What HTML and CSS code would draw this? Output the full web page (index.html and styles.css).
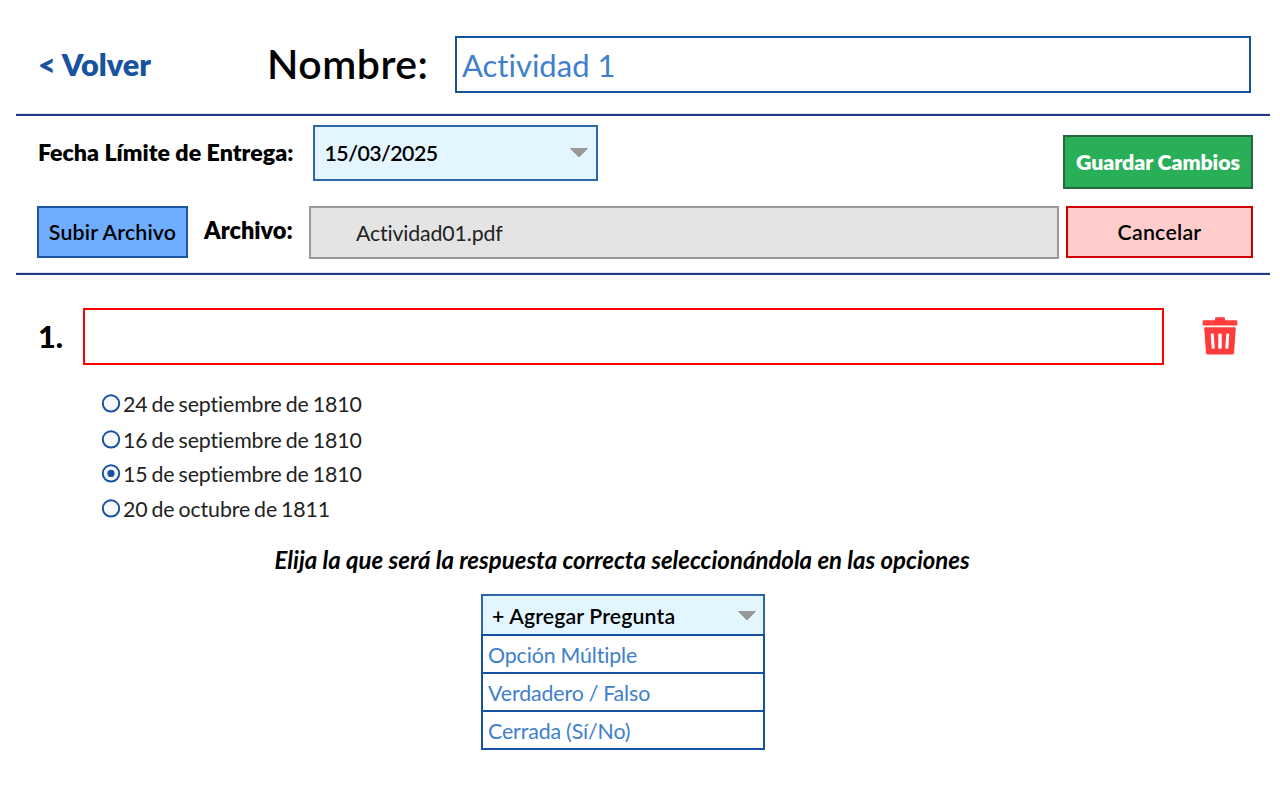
FILE: index.html
```html
<!DOCTYPE html>
<html lang="es">
<head>
<meta charset="utf-8">
<title>Actividad 1</title>
<link rel="stylesheet" href="styles.css">
</head>
<body>
<header class="header">
  <a class="back"><span class="t">&lt; Volver</span></a>
  <label class="name-label"><span class="t">Nombre:</span></label>
  <div class="name-field"><span class="t">Actividad 1</span></div>
</header>
<section class="toolbar">
  <div class="row row-date">
    <label class="date-label"><span class="t">Fecha Límite de Entrega:</span></label>
    <div class="select date-select"><span class="t">15/03/2025</span>
      <svg class="arrow" width="20" height="12" viewBox="0 0 20 12"><path d="M1.500 1.500H18.500L10 10Z" fill="#999" stroke="#999" stroke-linejoin="round"/></svg>
    </div>
    <button class="btn save"><span class="t">Guardar Cambios</span></button>
  </div>
  <div class="row row-file">
    <button class="btn upload"><span class="t">Subir Archivo</span></button>
    <label class="file-label"><span class="t">Archivo:</span></label>
    <div class="file-field"><span class="t">Actividad01.pdf</span></div>
    <button class="btn cancel"><span class="t">Cancelar</span></button>
  </div>
</section>
<main class="main">
  <div class="question">
    <span class="number"><span class="t">1.</span></span>
    <div class="question-field"></div>
    <svg class="trash" width="38" height="40" viewBox="0 0 38 40">
      <path fill="#ff3b3b" fill-rule="evenodd" d="M2.200 4.200H14V2.700Q14 1.300 15.400 1.300H22.600Q24 1.300 24 2.700V4.200H35.800Q36.300 4.200 36.300 4.700V8.900Q36.300 9.400 35.800 9.400H2.200Q1.700 9.400 1.700 8.900V4.700Q1.700 4.200 2.200 4.200ZM4.200 11.200H33.800Q34.900 11.200 34.800 12.300L33 37Q32.800 38.600 31.200 38.600H6.800Q5.200 38.600 5 37L3.200 12.300Q3.100 11.200 4.200 11.200ZM9.700 18.500Q9.600 17.500 10.600 17.500H11.700Q12.700 17.500 12.800 18.500L13.700 31.700Q13.700 32.700 12.800 32.700H11.600Q10.700 32.700 10.600 31.700ZM17.300 18.500Q17.300 17.500 18.200 17.500H19.800Q20.700 17.500 20.700 18.500V31.700Q20.700 32.700 19.800 32.700H18.200Q17.300 32.700 17.300 31.700ZM25.200 18.500Q25.300 17.500 26.300 17.500H27.400Q28.400 17.500 28.300 18.500L27.400 31.700Q27.300 32.700 26.400 32.700H25.200Q24.300 32.700 24.300 31.700Z"/>
    </svg>
  </div>
  <ul class="options">
    <li class="option"><svg width="20" height="20" viewBox="0 0 20 20"><circle class="ring" cx="10" cy="10.400" r="8.200"/></svg><span class="t">24 de septiembre de 1810</span></li>
    <li class="option"><svg width="20" height="20" viewBox="0 0 20 20"><circle class="ring" cx="10" cy="10.400" r="8.200"/></svg><span class="t">16 de septiembre de 1810</span></li>
    <li class="option"><svg width="20" height="20" viewBox="0 0 20 20"><circle class="ring" cx="10" cy="10.400" r="8.200"/><circle class="dot" cx="10" cy="10.400" r="3.600"/></svg><span class="t">15 de septiembre de 1810</span></li>
    <li class="option"><svg width="20" height="20" viewBox="0 0 20 20"><circle class="ring" cx="10" cy="10.400" r="8.200"/></svg><span class="t">20 de octubre de 1811</span></li>
  </ul>
  <p class="hint"><span class="t">Elija la que será la respuesta correcta seleccionándola en las opciones</span></p>
  <div class="add">
    <div class="select add-select"><span class="t">+ Agregar Pregunta</span>
      <svg class="arrow" width="20" height="12" viewBox="0 0 20 12"><path d="M1.500 1.500H18.500L10 10Z" fill="#999" stroke="#999" stroke-linejoin="round"/></svg>
    </div>
    <div class="item"><span class="t">Opción Múltiple</span></div>
    <div class="item"><span class="t">Verdadero / Falso</span></div>
    <div class="item"><span class="t">Cerrada (Sí/No)</span></div>
  </div>
</main>
</body>
</html>
```
FILE: styles.css
```css
* { box-sizing: border-box; }
body { margin: 0; width: 1280px; height: 800px; overflow: hidden; background: #fff; color: #000; font-family: "Lato", sans-serif; font-size: 21.33px; line-height: 26px; font-variant-ligatures: none; }
.t { display: block; white-space: nowrap; }
.header { display: flex; align-items: flex-start; height: 113px; margin: 0 10px 0 16px; padding: 36px 19px 0 22px; }
.back { width: 229px; padding-top: 11px; color: #1853a0; font-size: 30.67px; line-height: 36px; font-weight: 800; }
.name-label { width: 188px; padding-top: 4px; font-size: 41px; line-height: 48px; font-weight: 600; letter-spacing: 0.5px; }
.name-field { flex: 1; height: 57px; padding: 8px 5px; border: 2px solid #14529f; color: #3e80cd; font-size: 31px; line-height: 38px; }
.toolbar { height: 161px; margin: 1px 10px 0 16px; border: solid #24398c; border-width: 2px 0; box-shadow: 0 -1px #dfe2ef, inset 0 -1px #dfe2ef; padding: 9px 17px 0 21px; }
.row { display: flex; align-items: flex-start; }
.row-date { height: 81px; }
.date-label { width: 276px; padding: 14px 0 0 1px; font-size: 23.2px; line-height: 26px; font-weight: 800; }
.select { display: flex; align-items: center; justify-content: space-between; background: #e3f5ff; border: 2px solid #2e66ac; font-weight: 600; }
.date-select { width: 285px; height: 56px; padding: 0 7px 0 9.5px; letter-spacing: -0.55px; }
.btn { display: block; margin: 0; padding: 0; font: inherit; text-align: center; color: #000; font-weight: 600; }
.save { width: 190px; height: 54px; margin: 10px 0 0 auto; background: #29af58; border: 2px solid #28663f; color: #fff; font-weight: 800; letter-spacing: -0.1px; }
.upload { width: 151px; height: 52px; background: #6fadff; border: 2px solid #1c569f; letter-spacing: 0.15px; }
.file-label { width: 121px; padding: 11px 0 0 16px; font-size: 23.5px; font-weight: 800; }
.file-field { width: 750px; height: 53px; padding: 12px 0 0 45px; background: #e4e4e4; border: 2px solid #999; color: #222; letter-spacing: -0.15px; }
.cancel { width: 187px; height: 52px; margin-left: auto; background: #fcc; border: 2px solid #cf0000; letter-spacing: 0.25px; }
.main { display: flex; flex-direction: column; padding: 33px 0 0 38px; }
.question { display: flex; align-items: flex-start; }
.number { width: 45px; padding-top: 10px; font-size: 30.67px; line-height: 38px; font-weight: 900; }
.question-field { width: 1081px; height: 57px; border: 2px solid #f00; }
.trash { margin: 8px 0 0 37px; }
.options { list-style: none; margin: 21px 0 0 63px; padding: 0; color: #222; }
.option { display: flex; align-items: flex-start; height: 35px; gap: 2px; padding-top: 7px; }
.option:first-child { height: 36px; }
.option:nth-child(2) { height: 34px; }
.option .t { margin-top: -2px; letter-spacing: -0.12px; word-spacing: -1.3px; }
.ring { fill: #f9f9fb; stroke: #1853a0; stroke-width: 2; }
.dot { fill: #1853a0; }
.hint { margin: 20px 0 0 236.500px; font-size: 24px; line-height: 28px; font-weight: 700; font-style: italic; }
.add { width: 284px; margin: 20px 0 0 443px; }
.add-select { height: 40px; padding: 1px 6px 0 9px; border-bottom: 0; letter-spacing: 0.1px; }
.item { height: 38px; padding: 6px 0 0 5px; border: 2px solid #14529f; border-bottom: 0; color: #3e80cd; letter-spacing: -0.1px; word-spacing: -0.4px; }
.item:last-child { height: 40px; border-bottom: 2px solid #14529f; }
```
